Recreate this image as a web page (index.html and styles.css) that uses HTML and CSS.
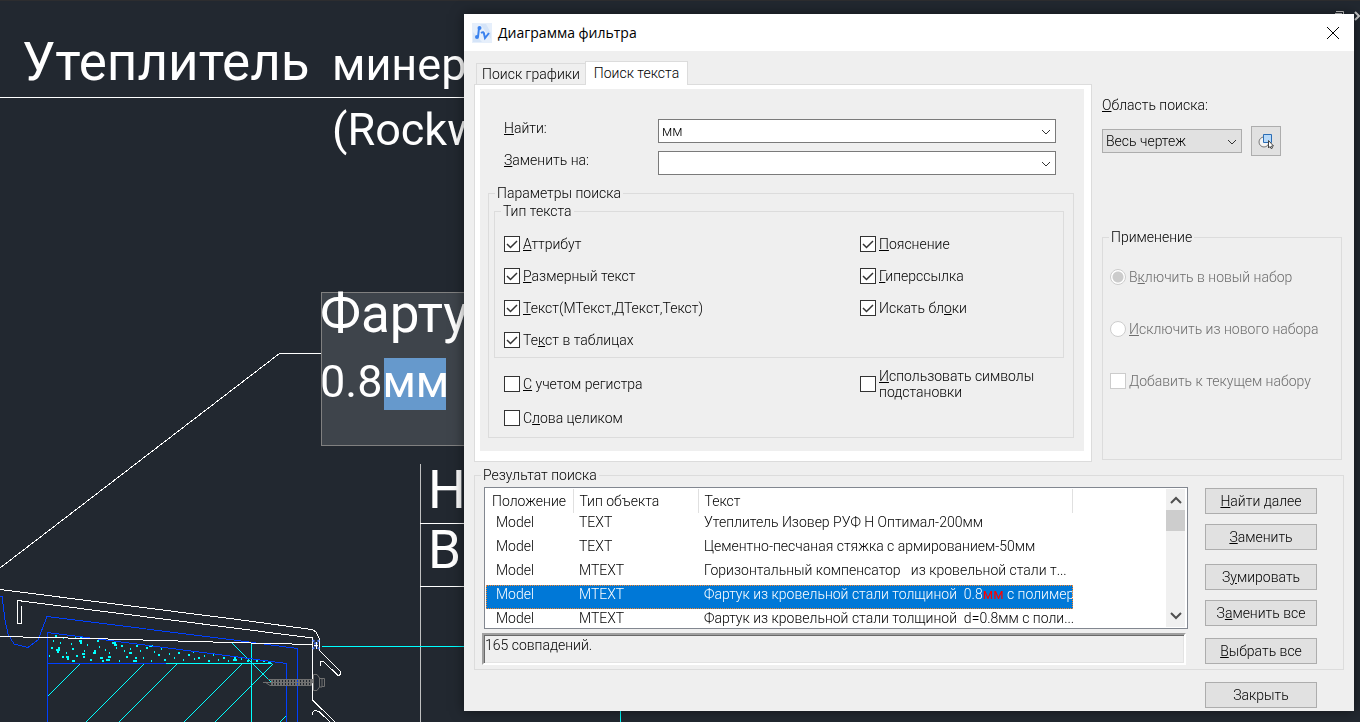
FILE: index.html
```html
<!DOCTYPE html>
<html lang="ru">
<head>
    <meta charset="UTF-8">
    <meta name="viewport" content="width=device-width, initial-scale=1.0">
    <title>Диаграмма фильтра</title>
    <link rel="stylesheet" href="styles.css">
</head>
<body>
    <svg class="drawing" aria-hidden="true">
        <!-- section labels -->
        <path class="white" d="M0 97.5H464"/>
        <text x="22" y="80">Утеплитель</text>
        <text class="note" x="332" y="80">минер</text>
        <text class="note" x="332" y="145">(Rockw</text>

        <!-- leader and edited note -->
        <path class="white" d="M0 568L279.500 353.500H321"/>
        <rect x="321.500" y="292.500" width="160" height="153" fill="#3e444b" stroke="#808080"/>
        <rect x="384" y="358" width="62" height="52" fill="#6699cc"/>
        <text x="320" y="332">Фарту</text>
        <text class="note" x="320" y="397">0.8мм</text>

        <!-- table on the right -->
        <path stroke="#c0c0c0" d="M420.500 464V722"/>
        <path class="white" d="M420 523.500H464M420 586.500H464"/>
        <text x="428" y="508">Н</text>
        <text x="428" y="568">В</text>

        <!-- insulation hatch -->
        <path class="hatch" d="M80 664L48 696M144 664L86 722M177 664L119 722M242 664L184 722M273 664L215 722M286 716L280 722M232 643L271 682"/>
        <path class="cyan" d="M251.500 643V722M322 646.500H464M620.500 711V722"/>
        <!-- concrete -->
        <path class="cyan" stroke-width="2" d="M49 656h1M51 648h2M53 641h1M55 636h2M56 650h4M58 648h2M57 652h2M60 643h1M62 657h2M63 638h1M66 653h1M66 657h3M67 659h2M71 644h1M72 649h2M72 661h3M75 637h1M76 656h2M79 641h3M80 638h2M80 643h2M82 654h3M83 657h2M84 651h1M87 645h1M90 660h2M93 653h3M94 651h2M97 641h2M99 647h1M100 658h3M102 661h2M105 650h1M106 660h4M108 657h3M109 653h1M112 643h4M114 645h3M116 648h1M119 661h1M121 646h2M124 651h1M126 657h2M129 653h3M130 649h1M133 661h4M135 658h2M136 646h2M140 651h1M143 658h1M146 648h2M149 646h4M151 661h1M154 652h1M158 655h2M161 649h1M164 660h2M169 654h1M174 658h1M178 653h2M183 660h1M188 655h2M193 652h1M194 659h1M198 658h2M204 656h1M208 661h2M213 655h1M218 660h1M223 658h2M228 661h1M233 660h4M234 658h2M241 659h1M247 661h2M256 661h2M263 661h2M268 662h3"/>
        <!-- roof boards -->
        <path class="blue" d="M0 596.500H2L5 620L8 634L14 644L28 647.500L38 640L47 616.500L230 639.500L297.500 648.500V722M47.500 722V632.500L230 656L286.500 663.500V722M47 663.500H166"/>
        <path class="cyan" d="M166 663.500H272"/>
        <!-- metal flashing -->
        <path class="white" d="M0 589.500L230 618.500L312 629.500L316 632L319.500 639V650.500L341 672Q341 675 338 675.500L324 662Q320 659 320 666M312.500 700V638L230 627.500L17.500 600.500V621L18 623.500H21.500V606M0 636.500L90 638.500L230 642.500L312 644.500M312.500 700L335 722M313 715Q312 711 315 710.500L319 711.500L330 722"/>
        <path stroke="#4d7dff" stroke-width="2" stroke-dasharray="2 1" d="M313 640L319 649M319 640L313 649"/>
        <path class="white" d="M314 645.500H318M316.500 642V649"/>
        <!-- screw -->
        <path stroke="#707070" fill="none" d="M263 682.500H313M268 679.500H313L311 685.500H270L265 682M313.500 674.500H317L319.500 678V687L317 690.500H313.500ZM319.500 678.500H322V687H319.500M322 678.500H324.500V686.500H322"/>
        <path stroke="#707070" stroke-width="6" stroke-dasharray="2 1" d="M271 682.500H312"/>
        <!-- window buttons of the drawing area -->
        <path stroke="#c8c8c8" d="M1335 13.500H1342M1336 11.500H1343.500V14" fill="none"/>
        <path stroke="#c8c8c8" stroke-width="2" d="M1355 12L1359 16L1355 20" fill="none"/>
    </svg>

    <form class="dialog">
        <header class="titlebar">
            <svg class="logo" width="20" height="20" viewBox="0 0 20 20">
                <rect width="20" height="20" fill="#e6effb"/>
                <path d="M8 1h6l5 9v6zM1 9l9 10H1z" fill="#d5e4f8"/>
                <path d="M7 5L6 14M9 10Q12 8 12 11L13 15L17 10" fill="none" stroke="#3b82ee" stroke-width="2"/>
                <circle cx="7.500" cy="5" r="2" fill="#3b82ee"/>
                <circle cx="5" cy="14" r="2" fill="#3b82ee"/>
            </svg>
            <h1>Диаграмма фильтра</h1>
            <button type="button" class="close" aria-label="Закрыть окно">
                <svg width="14" height="14" viewBox="0 0 14 14"><path d="M1 1L13 13M13 1L1 13" stroke="#000"/></svg>
            </button>
        </header>

        <div class="content">
            <div class="top">
                <div class="search">
                    <div class="tabs" role="tablist">
                        <button type="button" role="tab" class="tab">Поиск графики</button>
                        <button type="button" role="tab" class="tab active" aria-selected="true">Поиск текста</button>
                    </div>
                    <div class="tab-panel">
                        <div class="page">
                            <div class="fields">
                                <label for="find"><u>Н</u>айти:</label>
                                <span class="combo">
                                    <select id="find"><option>мм</option></select>
                                    <svg width="10" height="6" viewBox="0 0 10 6"><path d="M1 1L5 5L9 1"/></svg>
                                </span>
                                <label for="replace"><u>З</u>аменить на:</label>
                                <span class="combo">
                                    <select id="replace"><option></option></select>
                                    <svg width="10" height="6" viewBox="0 0 10 6"><path d="M1 1L5 5L9 1"/></svg>
                                </span>
                            </div>
                            <fieldset class="options">
                                <legend>Параметры поиска</legend>
                                <fieldset class="types">
                                    <legend>Тип текста</legend>
                                    <label class="check"><input type="checkbox" checked><span><u>А</u>ттрибут</span></label>
                                    <label class="check"><input type="checkbox" checked><span><u>П</u>ояснение</span></label>
                                    <label class="check"><input type="checkbox" checked><span><u>Р</u>азмерный текст</span></label>
                                    <label class="check"><input type="checkbox" checked><span><u>Г</u>иперссылка</span></label>
                                    <label class="check"><input type="checkbox" checked><span><u>Т</u>екст(МТекст,ДТекст,Текст)</span></label>
                                    <label class="check"><input type="checkbox" checked><span>Искать бл<u>о</u>ки</span></label>
                                    <label class="check"><input type="checkbox" checked><span>Те<u>к</u>ст в таблицах</span></label>
                                </fieldset>
                                <div class="flags">
                                    <label class="check"><input type="checkbox"><span><u>С</u> учетом регистра</span></label>
                                    <label class="check"><input type="checkbox"><span><u>И</u>спользовать символы<br>подстановки</span></label>
                                    <label class="check"><input type="checkbox"><span>С<u>л</u>ова целиком</span></label>
                                </div>
                            </fieldset>
                        </div>
                    </div>
                </div>

                <div class="scope">
                    <label for="area"><u>О</u>бласть поиска:</label>
                    <div class="scope-row">
                        <span class="combo gray">
                            <select id="area"><option>Весь чертеж</option></select>
                            <svg width="10" height="6" viewBox="0 0 10 6"><path d="M1 1L5 5L9 1"/></svg>
                        </span>
                        <button type="button" class="pick" aria-label="Выбрать объекты">
                            <svg width="16" height="16" viewBox="0 0 16 16">
                                <circle cx="6" cy="9" r="5" fill="#f4f4f4" stroke="#777"/>
                                <path d="M5.500 1.500H13.500V9.500H5.500Z" fill="#b8d9f8" stroke="#2a6db5"/>
                                <path d="M10.500 7.500V15L12 13.500L13 15.500L14.500 15L13.500 13H15.500Z" fill="#fff" stroke="#444"/>
                            </svg>
                        </button>
                    </div>
                    <fieldset class="apply" disabled>
                        <legend>Применение</legend>
                        <label class="check"><input type="radio" name="apply" checked><span>В<u>к</u>лючить в новый набор</span></label>
                        <label class="check"><input type="radio" name="apply"><span><u>И</u>сключить из нового набора</span></label>
                        <label class="check"><input type="checkbox"><span>Добавить к текущем набору</span></label>
                    </fieldset>
                </div>
            </div>

            <fieldset class="results">
                <legend>Результат поиска</legend>
                <div class="found">
                    <div class="list">
                        <table>
                            <thead>
                                <tr><th class="place">Положение</th><th class="type">Тип объекта</th><th>Текст</th></tr>
                            </thead>
                            <tbody>
                                <tr><td>Model</td><td>TEXT</td><td>Утеплитель Изовер РУФ Н Оптимал-200мм</td></tr>
                                <tr><td>Model</td><td>TEXT</td><td>Цементно-песчаная стяжка с армированием-50мм</td></tr>
                                <tr><td>Model</td><td>MTEXT</td><td>Горизонтальный компенсатор   из кровельной стали т...</td></tr>
                                <tr class="selected"><td>Model</td><td>MTEXT</td><td>Фартук из кровельной стали толщиной  0.8<mark>мм</mark> с полимер</td></tr>
                                <tr><td>Model</td><td>MTEXT</td><td>Фартук из кровельной стали толщиной  d=0.8мм с поли...</td></tr>
                            </tbody>
                        </table>
                        <div class="scrollbar">
                            <svg width="12" height="8" viewBox="0 0 12 8"><path d="M1 7L6 2L11 7"/></svg>
                            <div class="thumb"></div>
                            <svg width="12" height="8" viewBox="0 0 12 8"><path d="M1 1L6 6L11 1"/></svg>
                        </div>
                    </div>
                    <output class="status">165 совпадений.</output>
                </div>
                <div class="actions">
                    <button type="button"><u>Н</u>айти далее</button>
                    <button type="button"><u>З</u>аменить</button>
                    <button type="button" class="group">З<u>у</u>мировать</button>
                    <button type="button">З<u>а</u>менить все</button>
                    <button type="button"><u>В</u>ыбрать все</button>
                </div>
            </fieldset>

            <div class="bottom">
                <button type="button">Закрыть</button>
            </div>
        </div>
    </form>
</body>
</html>
```
FILE: styles.css
```css
* {
    box-sizing: border-box;
}
body {
    margin: 0;
    min-height: 100vh;
    background: #222830;
    border-top: 1px solid #2d2d2f;
    overflow: hidden;
    font-family: Roboto, sans-serif;
    font-size: 14px;
    font-weight: 300;
    line-height: 16px;
    color: #000;
}

/* drawing behind the dialog */
.drawing {
    position: fixed;
    top: 0;
    left: 0;
    width: 100%;
    height: 100%;
}
.drawing text {
    font-family: Roboto, sans-serif;
    font-size: 53px;
    font-weight: 400;
    fill: #fff;
}
.drawing .note {
    font-size: 45px;
}
.drawing .white, .drawing .cyan, .drawing .blue {
    fill: none;
    shape-rendering: crispEdges;
}
.white { stroke: #fff; }
.cyan, .hatch { stroke: #00ffff; }
.blue { stroke: #0040ff; }

/* dialog window */
.dialog {
    position: absolute;
    top: 14px;
    left: 464px;
    right: 6px;
    background: #efefef;
    box-shadow: 0 0 12px rgba(0, 0, 0, 0.5);
}
.titlebar {
    display: flex;
    align-items: center;
    gap: 6px;
    height: 37px;
    padding: 0 14px 0 8px;
    background: #fff;
}
.titlebar h1 {
    flex: 1;
    margin: 0;
    font-family: "Open Sans", sans-serif;
    font-size: 14px;
    font-weight: 400;
}
button {
    height: 26px;
    padding: 0;
    border: 1px solid #adadad;
    background: #e1e1e1;
    font: inherit;
    color: inherit;
}
.close {
    height: 14px;
    border: 0;
    background: none;
}
.close svg, .pick svg {
    display: block;
    margin: 0 auto;
}
.content {
    padding: 10px 10px 3px;
}
.top {
    display: grid;
    grid-template-columns: 1fr 240px;
    gap: 10px;
    padding-right: 2px;
}

/* tabs */
.tabs {
    display: flex;
    align-items: flex-end;
    padding-left: 2px;
}
.tab {
    width: 110px;
    height: 21px;
    border-color: #dcdcdc;
    border-bottom: 0;
    background: #efefef;
}
.tab.active {
    width: 103px;
    height: 24px;
    margin: 0 0 -1px -1px;
    padding-bottom: 2px;
    background: #fff;
    position: relative;
}
.tab-panel {
    padding: 4px 7px 10px 5px;
    border: 1px solid #dcdcdc;
    background: #fff;
}
.page {
    padding: 30px 10px 13px 8px;
    background: #efefef;
}
.fields {
    display: grid;
    grid-template-columns: 154px 1fr;
    gap: 8px 0;
    padding: 0 18px 10px 16px;
}
.fields label {
    padding-top: 1px;
}

/* drop-downs */
.combo {
    position: relative;
    display: block;
}
.combo select {
    display: block;
    width: 100%;
    height: 24px;
    padding: 0 3px;
    appearance: none;
    border: 1px solid #7a7a7a;
    border-radius: 0;
    background: #fff;
    font: inherit;
    color: inherit;
}
.combo.gray select {
    border-color: #adadad;
    background: #e1e1e1;
}
.combo svg {
    position: absolute;
    right: 5px;
    top: 10px;
    pointer-events: none;
}
.combo path {
    fill: none;
    stroke: #333;
}

/* group boxes */
fieldset {
    min-width: 0;
    margin: 0;
    padding: 0;
    border: 1px solid #dcdcdc;
}
legend {
    margin-left: -1px;
    padding: 0 2px;
    height: 16px;
    white-space: nowrap;
}
.options {
    padding: 2px 9px 11px 5px;
}
.options > legend {
    margin-left: 1px;
}
.types > legend {
    margin-left: -3px;
}
.types, .flags {
    display: grid;
    grid-template-columns: 356px 1fr;
}
.types {
    padding: 17px 0 9px 9px;
    row-gap: 16px;
}
.flags {
    padding: 10px 0 0 10px;
    row-gap: 10px;
}
.check {
    display: flex;
    align-items: center;
    gap: 3px;
    white-space: nowrap;
}
.types .check {
    height: 16px;
}
.check input {
    flex: none;
    width: 16px;
    height: 16px;
    margin: 0;
    appearance: none;
    border: 1px solid #333;
    background: #fff;
}
.check input[type=checkbox]:checked {
    background: #fff url("data:image/svg+xml,%3Csvg xmlns='http://www.w3.org/2000/svg' viewBox='0 0 14 14'%3E%3Cpath d='M2 7L5.500 10.500L12 4' fill='none' stroke='%23333' stroke-width='1.500'/%3E%3C/svg%3E");
}

/* search area */
.scope {
    padding-top: 36px;
}
.scope-row {
    display: flex;
    align-items: center;
    gap: 9px;
    margin: 13px 0 73px;
}
.scope-row .combo {
    width: 140px;
}
.pick {
    width: 30px;
    height: 30px;
}
.apply {
    display: flex;
    flex-direction: column;
    gap: 36px;
    height: 231px;
    padding: 24px 0 0 7px;
    color: #6d6d6d;
}
.apply legend {
    color: #000;
}
.apply .check input {
    border-color: #ccc;
}
.check input[type=radio] {
    border-radius: 50%;
}
.check input[type=radio]:checked {
    background: radial-gradient(#ccc 5px, #fff 6px);
}

/* results */
.results {
    display: grid;
    grid-template-columns: 1fr 112px;
    gap: 17px;
    margin-top: 5px;
    padding: 4px 26px 4px 7px;
}
.list {
    display: flex;
    justify-content: space-between;
    height: 142px;
    margin-left: 2px;
    padding: 1px 2px 1px 1px;
    border: 1px solid #828790;
    background: #fff;
    overflow: hidden;
}
table {
    width: 587px;
    table-layout: fixed;
    border-collapse: collapse;
    align-self: flex-start;
}
th, td {
    padding: 0 0 0 6px;
    font-weight: 300;
    text-align: left;
    white-space: pre;
}
th {
    height: 24px;
    border-right: 1px solid #e0e0e0;
}
td {
    height: 24px;
    padding-bottom: 6px;
}
td:first-child {
    padding-left: 10px;
}
.place {
    width: 87px;
}
.type {
    width: 125px;
}
.selected {
    background: #0078d7;
    color: #fff;
    outline: 1px dotted #ff8728;
    outline-offset: -1px;
}
mark {
    background: none;
    color: #f00;
    font-weight: 400;
}
.scrollbar {
    display: flex;
    flex-direction: column;
    align-items: center;
    width: 19px;
    padding: 7px 0;
    background: #f0f0f0;
}
.scrollbar path {
    fill: none;
    stroke: #505050;
    stroke-width: 2;
}
.thumb {
    width: 19px;
    height: 21px;
    margin: 6px 0 auto;
    background: #cdcdcd;
}
.status {
    display: block;
    height: 32px;
    margin: 4px 2px 0 0;
    padding: 2px 0 0 1px;
    border: 2px solid #fff;
    border-top-color: #a0a0a0;
    border-left-color: #a0a0a0;
    box-shadow: inset 1px 1px #696969, inset -1px -1px #e3e3e3;
}
.actions {
    display: flex;
    flex-direction: column;
    gap: 10px;
    padding-top: 1px;
}
.actions .group {
    margin-top: 4px;
}
.actions button:last-child {
    margin-top: 2px;
}
.bottom {
    display: flex;
    justify-content: flex-end;
    padding: 12px 27px 0 0;
}
.bottom button {
    width: 112px;
}
```
